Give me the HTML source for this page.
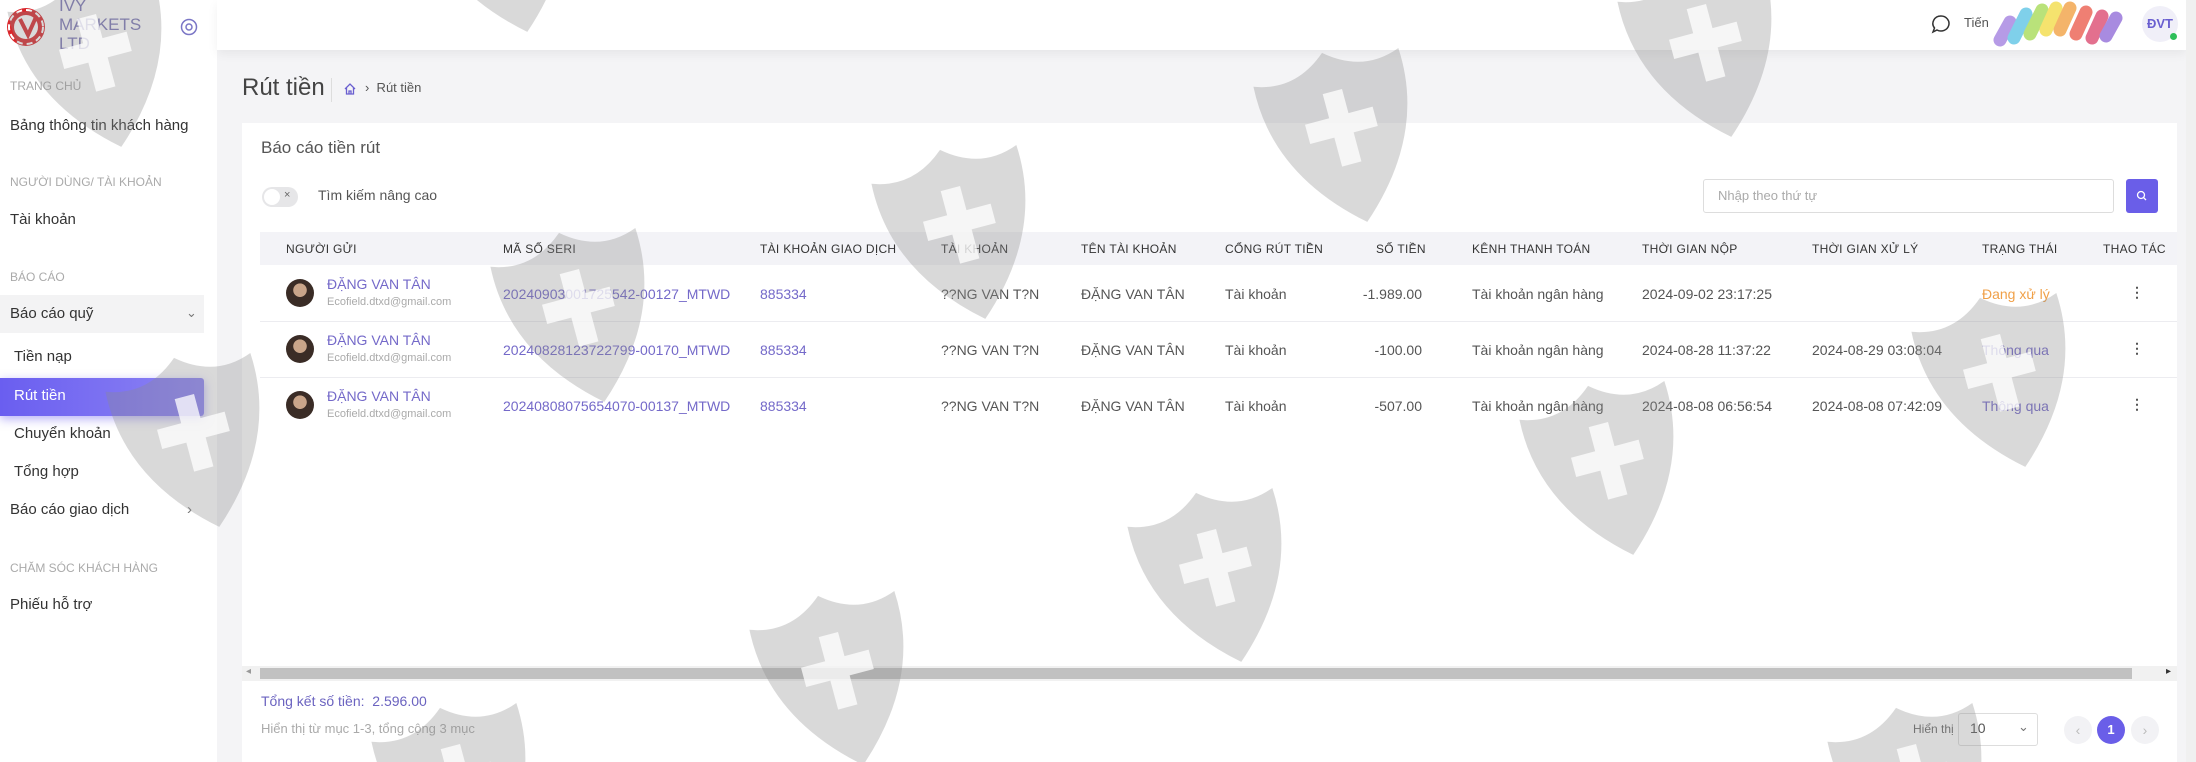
<!DOCTYPE html>
<html style="overflow:hidden;height:762px"><head><meta charset="utf-8">
<style>
*{margin:0;padding:0;box-sizing:border-box}
body{width:2196px;height:762px;overflow:hidden;background:#f4f4f6;font-family:"Liberation Sans",Arial,sans-serif;color:#444;position:relative}
.a{position:absolute;white-space:nowrap}
#side{position:absolute;left:0;top:0;width:217px;height:762px;background:#fff}
.lab{font-size:12px;color:#aaa;left:10px}
.it{font-size:15px;color:#333;left:10px}
#top{position:absolute;left:217px;top:0;width:1969px;height:50px;background:#fff;box-shadow:0 4px 10px rgba(0,0,0,.06)}
#card{position:absolute;left:242px;top:123px;width:1935px;height:639px;background:#fff}
.th{font-size:12px;color:#333;top:242px;letter-spacing:.3px}
.td{font-size:14px;color:#555}
.pu{color:#7469c9}
.row{position:absolute;left:260px;width:1917px;height:1px;background:#ececf0}
</style></head><body>
<div id="side">
  <svg class="a" style="left:6px;top:7px" width="40" height="40" viewBox="0 0 40 40"><circle cx="20" cy="20" r="19" fill="#d9262b"/><circle cx="20" cy="20" r="12" fill="#fff"/><path d="M14 12 L22 28 L30 10" stroke="#d9262b" stroke-width="4" fill="none"/><circle cx="20" cy="20" r="17" fill="none" stroke="#fff" stroke-width="2" stroke-dasharray="6 4"/></svg>
  <div class="a" style="left:59px;top:-4px;font-size:17px;line-height:19px;color:#7b76b6">IVY<br>MARKETS<br>LTD</div>
  <svg class="a" style="left:180px;top:18px" width="18" height="18" viewBox="0 0 18 18"><circle cx="9" cy="9" r="7.5" fill="none" stroke="#7b76c6" stroke-width="1.5"/><circle cx="9" cy="9" r="3" fill="none" stroke="#7b76c6" stroke-width="1.5"/></svg>
  <div class="a lab" style="top:79px">TRANG CHỦ</div>
  <div class="a it" style="top:117px">Bảng thông tin khách hàng</div>
  <div class="a lab" style="top:175px">NGƯỜI DÙNG/ TÀI KHOẢN</div>
  <div class="a it" style="top:211px">Tài khoản</div>
  <div class="a lab" style="top:270px">BÁO CÁO</div>
  <div class="a" style="left:0;top:295px;width:204px;height:38px;background:#f3f3f4"></div>
  <div class="a it" style="top:305px">Báo cáo quỹ</div>
  <div class="a" style="left:186px;top:305px;font-size:13px;color:#777">⌄</div>
  <div class="a it" style="top:348px;left:14px">Tiền nạp</div>
  <div class="a" style="left:0;top:378px;width:204px;height:38px;background:linear-gradient(90deg,#6a5ef0,#8d84f4);box-shadow:0 3px 10px rgba(110,95,240,.5);border-radius:0 3px 3px 0"></div>
  <div class="a it" style="top:387px;left:14px;color:#fff">Rút tiền</div>
  <div class="a it" style="top:425px;left:14px">Chuyển khoản</div>
  <div class="a it" style="top:463px;left:14px">Tổng hợp</div>
  <div class="a it" style="top:501px">Báo cáo giao dịch</div>
  <div class="a" style="left:187px;top:501px;font-size:15px;color:#777">›</div>
  <div class="a lab" style="top:561px">CHĂM SÓC KHÁCH HÀNG</div>
  <div class="a it" style="top:596px">Phiếu hỗ trợ</div>
</div>
<div id="top"></div>
<div class="a" style="left:2186px;top:0;width:10px;height:762px;background:#f0f0f0"></div>
<svg class="a" style="left:1931px;top:14px" width="20" height="20" viewBox="0 0 20 20"><path d="M10 2a8 7.5 0 1 1-4 14L2 18l1.5-4A8 7.5 0 0 1 10 2z" fill="none" stroke="#333" stroke-width="1.5"/></svg>
<div class="a" style="left:1964px;top:15px;font-size:13px;color:#555">Tiến</div>
<svg class="a" style="left:1992px;top:0" width="140" height="48" viewBox="0 0 140 48"><g stroke-width="13" stroke-linecap="round" fill="none"><path d="M8 40 L18 22" stroke="#b69be6"/><path d="M22 38 L34 14" stroke="#7fd0ea"/><path d="M38 34 L50 10" stroke="#b9e27a"/><path d="M54 30 L64 8" stroke="#f5e36e"/><path d="M68 30 L78 8" stroke="#f4b46a"/><path d="M84 34 L94 12" stroke="#ef7f73"/><path d="M100 38 L110 16" stroke="#e3708e"/><path d="M114 36 L124 18" stroke="#a88be0"/></g></svg>
<div class="a" style="left:2142px;top:6px;width:36px;height:36px;border-radius:50%;background:#f0eff8;font-size:13px;font-weight:bold;color:#6a5fd0;text-align:center;line-height:36px">ĐVT</div>
<div class="a" style="left:2170px;top:33px;width:7px;height:7px;border-radius:50%;background:#2fbf5a"></div>

<div class="a" style="left:242px;top:74px;font-size:24px;color:#444">Rút tiền</div>
<div class="a" style="left:331px;top:78px;width:1px;height:24px;background:#ddd"></div>
<svg class="a" style="left:343px;top:82px" width="14" height="14" viewBox="0 0 14 14"><path d="M2 7L7 2l5 5M3.5 6v6h7V6M6 12V9h2v3" fill="none" stroke="#6a5fd0" stroke-width="1.3"/></svg>
<div class="a" style="left:365px;top:80px;font-size:13px;color:#555">›&nbsp;&nbsp;Rút tiền</div>

<div id="card"></div>
<div class="a" style="left:261px;top:138px;font-size:17px;color:#555">Báo cáo tiền rút</div>
<div class="a" style="left:262px;top:187px;width:36px;height:20px;border-radius:10px;background:#e6e6e8"></div>
<div class="a" style="left:264px;top:189px;width:16px;height:16px;border-radius:50%;background:#fff"></div>
<div class="a" style="left:284px;top:189px;font-size:11px;color:#666">×</div>
<div class="a" style="left:318px;top:187px;font-size:14px;color:#555">Tìm kiếm nâng cao</div>
<div class="a" style="left:1703px;top:179px;width:411px;height:34px;border:1px solid #ddd;border-radius:3px"></div>
<div class="a" style="left:1718px;top:188px;font-size:13px;color:#aaa">Nhập theo thứ tự</div>
<div class="a" style="left:2126px;top:179px;width:32px;height:34px;border-radius:3px;background:#6a5ee8"></div>
<svg class="a" style="left:2136px;top:190px" width="12" height="12" viewBox="0 0 12 12"><circle cx="5" cy="5" r="3.5" fill="none" stroke="#fff" stroke-width="1.3"/><path d="M7.6 7.6L10 10" stroke="#fff" stroke-width="1.3"/></svg>

<div class="a" style="left:260px;top:232px;width:1917px;height:33px;background:#f3f3f7"></div>
<div class="a th" style="left:286px">NGƯỜI GỬI</div>
<div class="a th" style="left:503px">MÃ SỐ SERI</div>
<div class="a th" style="left:760px">TÀI KHOẢN GIAO DỊCH</div>
<div class="a th" style="left:941px">TÀI KHOẢN</div>
<div class="a th" style="left:1081px">TÊN TÀI KHOẢN</div>
<div class="a th" style="left:1225px">CỔNG RÚT TIỀN</div>
<div class="a th" style="left:1376px">SỐ TIỀN</div>
<div class="a th" style="left:1472px">KÊNH THANH TOÁN</div>
<div class="a th" style="left:1642px">THỜI GIAN NỘP</div>
<div class="a th" style="left:1812px">THỜI GIAN XỬ LÝ</div>
<div class="a th" style="left:1982px">TRẠNG THÁI</div>
<div class="a th" style="left:2103px">THAO TÁC</div>

<div class="row" style="top:321px"></div><div class="row" style="top:377px"></div>

<div class="a" style="left:286px;top:279px;width:28px;height:28px;border-radius:50%;background:radial-gradient(circle at 50% 40%,#c9a58a 0 30%,#3a2c26 32%)"></div>
<div class="a td pu" style="left:327px;top:276px">ĐẶNG VAN TÂN</div>
<div class="a" style="left:327px;top:296px;font-size:11px;color:#aaa">Ecofield.dtxd@gmail.com</div>
<div class="a td pu" style="left:503px;top:286px">20240903001725542-00127_MTWD</div>
<div class="a td pu" style="left:760px;top:286px">885334</div>
<div class="a td" style="left:941px;top:286px">??NG VAN T?N</div>
<div class="a td" style="left:1081px;top:286px">ĐẶNG VAN TÂN</div>
<div class="a td" style="left:1225px;top:286px">Tài khoản</div>
<div class="a td" style="left:1300px;width:122px;text-align:right;top:286px">-1.989.00</div>
<div class="a td" style="left:1472px;top:286px">Tài khoản ngân hàng</div>
<div class="a td" style="left:1642px;top:286px">2024-09-02 23:17:25</div>
<div class="a td" style="left:1982px;top:286px;color:#f0a048">Đang xử lý</div>
<div class="a td" style="left:2130px;top:284px;font-weight:bold">⋮</div>

<div class="a" style="left:286px;top:335px;width:28px;height:28px;border-radius:50%;background:radial-gradient(circle at 50% 40%,#c9a58a 0 30%,#3a2c26 32%)"></div>
<div class="a td pu" style="left:327px;top:332px">ĐẶNG VAN TÂN</div>
<div class="a" style="left:327px;top:352px;font-size:11px;color:#aaa">Ecofield.dtxd@gmail.com</div>
<div class="a td pu" style="left:503px;top:342px">20240828123722799-00170_MTWD</div>
<div class="a td pu" style="left:760px;top:342px">885334</div>
<div class="a td" style="left:941px;top:342px">??NG VAN T?N</div>
<div class="a td" style="left:1081px;top:342px">ĐẶNG VAN TÂN</div>
<div class="a td" style="left:1225px;top:342px">Tài khoản</div>
<div class="a td" style="left:1300px;width:122px;text-align:right;top:342px">-100.00</div>
<div class="a td" style="left:1472px;top:342px">Tài khoản ngân hàng</div>
<div class="a td" style="left:1642px;top:342px">2024-08-28 11:37:22</div>
<div class="a td" style="left:1812px;top:342px">2024-08-29 03:08:04</div>
<div class="a td pu" style="left:1982px;top:342px">Thông qua</div>
<div class="a td" style="left:2130px;top:340px;font-weight:bold">⋮</div>

<div class="a" style="left:286px;top:391px;width:28px;height:28px;border-radius:50%;background:radial-gradient(circle at 50% 40%,#c9a58a 0 30%,#3a2c26 32%)"></div>
<div class="a td pu" style="left:327px;top:388px">ĐẶNG VAN TÂN</div>
<div class="a" style="left:327px;top:408px;font-size:11px;color:#aaa">Ecofield.dtxd@gmail.com</div>
<div class="a td pu" style="left:503px;top:398px">20240808075654070-00137_MTWD</div>
<div class="a td pu" style="left:760px;top:398px">885334</div>
<div class="a td" style="left:941px;top:398px">??NG VAN T?N</div>
<div class="a td" style="left:1081px;top:398px">ĐẶNG VAN TÂN</div>
<div class="a td" style="left:1225px;top:398px">Tài khoản</div>
<div class="a td" style="left:1300px;width:122px;text-align:right;top:398px">-507.00</div>
<div class="a td" style="left:1472px;top:398px">Tài khoản ngân hàng</div>
<div class="a td" style="left:1642px;top:398px">2024-08-08 06:56:54</div>
<div class="a td" style="left:1812px;top:398px">2024-08-08 07:42:09</div>
<div class="a td pu" style="left:1982px;top:398px">Thông qua</div>
<div class="a td" style="left:2130px;top:396px;font-weight:bold">⋮</div>

<div class="a" style="left:242px;top:666px;width:1935px;height:15px;background:#f1f1f1"></div>
<div class="a" style="left:260px;top:668px;width:1872px;height:11px;background:#c1c1c1"></div>
<div class="a" style="left:246px;top:666px;font-size:10px;color:#999">◂</div>
<div class="a" style="left:2166px;top:666px;font-size:10px;color:#333">▸</div>

<div class="a" style="left:261px;top:693px;font-size:14px;color:#6b63c0">Tổng kết số tiền:&nbsp; 2.596.00</div>
<div class="a" style="left:261px;top:721px;font-size:13px;color:#aaa">Hiển thị từ mục 1-3, tổng cộng 3 mục</div>
<div class="a" style="left:1913px;top:722px;font-size:12px;color:#666">Hiển thị</div>
<div class="a" style="left:1958px;top:713px;width:80px;height:33px;border:1px solid #ddd;border-radius:3px"></div>
<div class="a" style="left:1970px;top:720px;font-size:14px;color:#555">10</div>
<div class="a" style="left:2018px;top:719px;font-size:13px;color:#777">⌄</div>
<div class="a" style="left:2064px;top:716px;width:28px;height:28px;border-radius:50%;background:#f2f2f5;color:#bbb;text-align:center;line-height:28px;font-size:14px">‹</div>
<div class="a" style="left:2097px;top:716px;width:28px;height:28px;border-radius:50%;background:#6a5ee8;color:#fff;text-align:center;line-height:28px;font-size:13px;font-weight:bold">1</div>
<div class="a" style="left:2131px;top:716px;width:28px;height:28px;border-radius:50%;background:#f2f2f5;color:#bbb;text-align:center;line-height:28px;font-size:14px">›</div>

<svg class="a" style="left:0;top:0;pointer-events:none;overflow:hidden" width="2196" height="762" viewBox="0 0 2196 762">
<defs><g id="sh"><path d="M-75 -70 Q-35 -55 0 -85 Q35 -55 75 -70 Q80 20 0 90 Q-80 20 -75 -70Z" fill="rgba(140,140,140,0.33)"/><path d="M-10 -45h20v25h25v20h-25v30h-20v-30h-25v-20h25z" fill="rgba(255,255,255,0.75)"/></g></defs>
<use href="#sh" transform="translate(98,60) rotate(-15)"/>
<use href="#sh" transform="translate(504,-55) rotate(-15)"/>
<use href="#sh" transform="translate(1344,135) rotate(-15)"/>
<use href="#sh" transform="translate(1708,50) rotate(-15)"/>
<use href="#sh" transform="translate(962,232) rotate(-15)"/>
<use href="#sh" transform="translate(581,315) rotate(-15)"/>
<use href="#sh" transform="translate(196,440) rotate(-15)"/>
<use href="#sh" transform="translate(1610,468) rotate(-15)"/>
<use href="#sh" transform="translate(2002,380) rotate(-15)"/>
<use href="#sh" transform="translate(1218,575) rotate(-15)"/>
<use href="#sh" transform="translate(840,678) rotate(-15)"/>
<use href="#sh" transform="translate(462,790) rotate(-15)"/>
<use href="#sh" transform="translate(1918,790) rotate(-15)"/>
</svg>
</body></html>
